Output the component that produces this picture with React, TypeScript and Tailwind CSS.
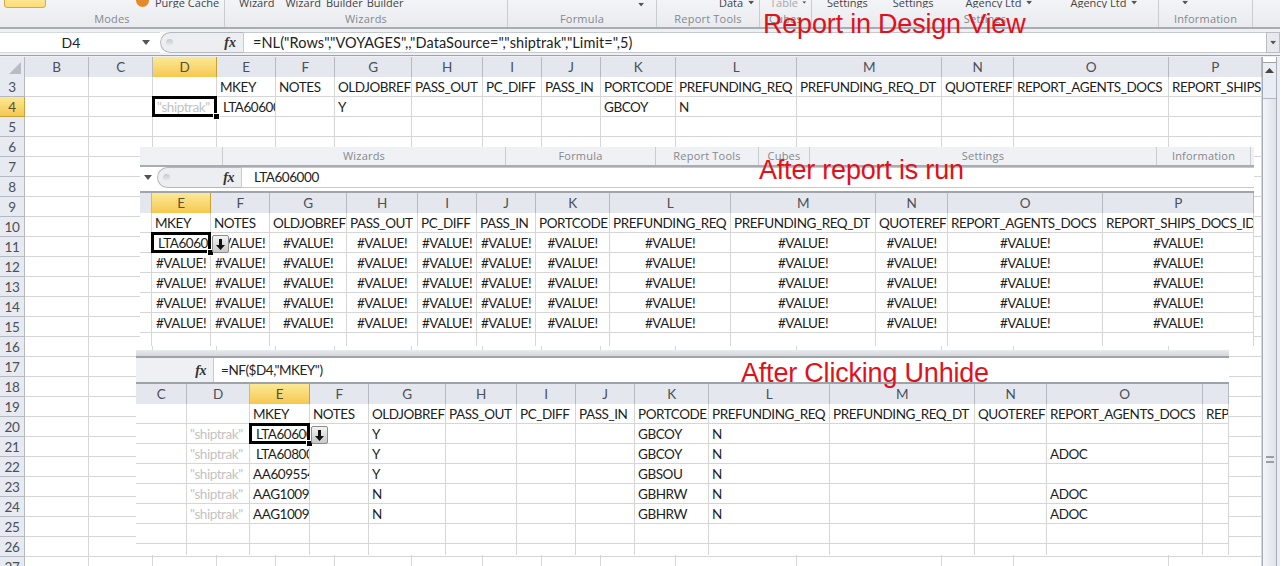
import type { ReactNode } from 'react';

const sheetFont = "font-['Lato','Open_Sans',sans-serif] text-[13.5px] tracking-[-0.45px]";

type CellValue = {
  text?: string;
  kind?: 'plain' | 'center' | 'ghost' | 'indent' | 'selected' | 'selectedGhost' | 'selectedButton';
};

const hdrs = ['MKEY', 'NOTES', 'OLDJOBREF', 'PASS_OUT', 'PC_DIFF', 'PASS_IN', 'PORTCODE', 'PREFUNDING_REQ', 'PREFUNDING_REQ_DT', 'QUOTEREF', 'REPORT_AGENTS_DOCS'];

const plain = (list: string[]): CellValue[] => list.map((text) => ({ text }));
const blank = (n: number): CellValue[] => Array.from({ length: n }, () => ({}));

const ArrowButton = () => (
  <div className="absolute left-[calc(100%+2px)] top-[2px] z-20 flex h-[18px] w-[17px] items-center justify-center rounded-[2px] border border-[#8d8d8d] bg-gradient-to-b from-[#f4f4f4] to-[#c9c9c9]">
    <svg width="9" height="11" viewBox="0 0 9 11">
      <path d="M3 0h3v6h3l-4.5 5L0 6h3z" fill="#111" />
    </svg>
  </div>
);

const Cell = ({ text, kind = 'plain' }: CellValue) => {
  const selected = kind === 'selected' || kind === 'selectedGhost' || kind === 'selectedButton';
  const tone =
    kind === 'center'
      ? 'text-center'
      : kind === 'ghost'
        ? 'pl-[3px] text-[#c3c3c3]'
        : kind === 'selectedGhost'
          ? 'pl-[4px] text-[#c3c3c3]'
          : kind === 'indent' || selected
            ? 'pl-[6px]'
            : 'pl-[3px]';
  return (
    <div className="relative h-[20px] border-r border-b border-[#d6d6d6] bg-white text-[#1d1d1d]">
      <div className={`h-full overflow-hidden whitespace-nowrap leading-[20px] ${tone}`}>{text}</div>
      {selected && (
        <div className="pointer-events-none absolute -top-[1px] -left-[1px] right-[-1px] bottom-[-1px] z-10 border-[3px] border-black">
          <div className="absolute -right-[5px] -bottom-[5px] h-[5px] w-[5px] bg-black outline outline-1 outline-white" />
        </div>
      )}
      {kind === 'selectedButton' && <ArrowButton />}
    </div>
  );
};

const ColHead = ({ label, active }: { label: string; active?: boolean }) => (
  <div
    className={`h-[20px] border-r text-center leading-[20px] ${
      active
        ? 'border-[#c9a233] bg-gradient-to-b from-[#fbe995] to-[#f5c84f] text-[#5a5030]'
        : 'border-[#b4b9c2] bg-[#e4e7ee] text-[#4b5058]'
    }`}
  >
    {label}
  </div>
);

const RowHead = ({ label, active }: { label: number; active?: boolean }) => (
  <div
    className={`h-[20px] border-r border-b text-center leading-[20px] ${
      active
        ? 'border-[#c9a233] bg-gradient-to-b from-[#fbe995] to-[#f5c84f] text-[#5a5030]'
        : 'border-[#b4b9c2] bg-[#e7eaf0] text-[#4b5058]'
    }`}
  >
    {label}
  </div>
);

const Bubble = () => (
  <div className="flex h-full flex-1 items-center rounded-l-full border-l border-y border-[#b4b8be] bg-[#eceef1] pl-[5px]">
    <div className="h-[7px] w-[7px] rounded-full bg-gradient-to-b from-[#c4c7cb] to-[#eceef1]" />
  </div>
);

const Fx = () => (
  <span className="mr-[7px] ml-[6px] font-['Liberation_Serif',serif] text-[14px] font-bold italic text-[#333]">fx</span>
);

const DownCaret = ({ className = '' }: { className?: string }) => (
  <svg width="9" height="5" viewBox="0 0 9 5" className={className}>
    <path d="M0 0h8L4 5z" fill="#555" />
  </svg>
);

const GroupLabel = ({ width, label }: { width: string; label: string }) => (
  <div
    className={`flex h-full shrink-0 items-center justify-center border-r border-[#c9ccd1] font-['Open_Sans',sans-serif] text-[11px] tracking-[0.2px] text-[#84888e] ${width}`}
  >
    {label}
  </div>
);

const topText = "font-['Open_Sans',sans-serif] text-[11px] text-[#444] whitespace-nowrap";

const RibbonGroup = ({ width, label, children }: { width: string; label: string; children?: ReactNode }) => (
  <div className={`flex h-full shrink-0 flex-col border-r border-[#c9ccd1] ${width}`}>
    <div className={`relative flex h-[10px] items-end overflow-hidden leading-[14px] ${topText}`}>{children}</div>
    <div className="flex flex-1 items-center justify-center pt-[3px] font-['Open_Sans',sans-serif] text-[11px] tracking-[0.2px] text-[#84888e]">
      {label}
    </div>
  </div>
);

const RedNote = ({ className, children }: { className: string; children: string }) => (
  <div className={`absolute z-30 whitespace-nowrap font-['Liberation_Sans',sans-serif] text-[27px] leading-[30px] tracking-[-0.2px] text-[#e2101a] ${className}`}>
    {children}
  </div>
);

const baseRows: { row: number; cells: CellValue[] }[] = [
  { row: 3, cells: [...blank(3), ...plain(hdrs), { text: 'REPORT_SHIPS_DOCS_ID' }] },
  {
    row: 4,
    cells: [
      ...blank(2),
      { text: '"shiptrak"', kind: 'selectedGhost' },
      { text: 'LTA606000', kind: 'indent' },
      {},
      { text: 'Y' },
      ...blank(3),
      { text: 'GBCOY' },
      { text: 'N' },
      ...blank(4),
    ],
  },
];

const baseSheet = Array.from({ length: 25 }, (_, i) => {
  const row = i + 3;
  return baseRows.find((r) => r.row === row) ?? { row, cells: blank(15) };
});

const v = (): CellValue => ({ text: '#VALUE!', kind: 'center' });

const secondRows: CellValue[][] = [
  [{}, ...plain(hdrs), { text: 'REPORT_SHIPS_DOCS_ID' }],
  [{}, { text: 'LTA606000', kind: 'selectedButton' }, ...Array.from({ length: 11 }, v)],
  ...Array.from({ length: 4 }, () => [{} as CellValue, ...Array.from({ length: 12 }, v)]),
  blank(13),
];

const thirdData = [
  ['LTA606000', 'Y', 'GBCOY', 'N', ''],
  ['LTA608000', 'Y', 'GBCOY', 'N', 'ADOC'],
  ['AA609554', 'Y', 'GBSOU', 'N', ''],
  ['AAG100900', 'N', 'GBHRW', 'N', 'ADOC'],
  ['AAG100901', 'N', 'GBHRW', 'N', 'ADOC'],
];

const thirdRows: CellValue[][] = [
  [...blank(2), ...plain(hdrs), { text: 'REPORT_SHIPS_DOCS_ID' }],
  ...thirdData.map((d, i): CellValue[] => [
    {},
    { text: '"shiptrak"', kind: 'ghost' },
    { text: d[0], kind: i === 0 ? 'selectedButton' : i === 1 ? 'indent' : 'plain' },
    {},
    { text: d[1] },
    ...blank(3),
    { text: d[2] },
    { text: d[3] },
    ...blank(2),
    { text: d[4] },
    {},
  ]),
  blank(14),
  blank(14),
];

const App = () => {
  return (
    <div className="relative h-[566px] w-[1285px] overflow-hidden bg-white">
      {/* Base sheet: report in design view */}
      <div className="w-[1280px]">
        <div className="flex h-[29px] border-b-2 border-[#a9adb3] bg-gradient-to-b from-[#f3f4f7] to-[#e9ebef] pr-[27px]">
          <RibbonGroup width="w-[225px]" label="Modes">
            <div className="absolute bottom-0 left-[4px] h-[14px] w-[42px] rounded-[3px] border border-[#dca53f] bg-gradient-to-b from-[#fdeda3] to-[#fcdc75]" />
            <div className="absolute bottom-[1px] left-[136px] h-[13px] w-[13px] rounded-full bg-[#e58a2c]" />
            <span className="absolute bottom-[-2px] left-[155px]">Purge Cache</span>
          </RibbonGroup>
          <RibbonGroup width="w-[283px]" label="Wizards">
            <div className="mb-[-2px] ml-[14px] flex">
              <span>Wizard</span>
              <span className="ml-[11px]">Wizard</span>
              <span className="ml-[5px]">Builder</span>
              <span className="ml-[4px]">Builder</span>
            </div>
          </RibbonGroup>
          <RibbonGroup width="w-[149px]" label="Formula">
            <DownCaret className="mb-[1px] ml-[129px] scale-75" />
          </RibbonGroup>
          <RibbonGroup width="w-[103px]" label="Report Tools">
            <span className="mb-[-2px] ml-[62px]">Data</span>
            <DownCaret className="mb-[3px] ml-[4px] scale-75" />
          </RibbonGroup>
          <RibbonGroup width="w-[52px]" label="Cubes">
            <span className="mb-[-2px] ml-[10px] text-[#a5a8ad]">Table</span>
            <DownCaret className="mb-[3px] ml-[2px] scale-50" />
          </RibbonGroup>
          <RibbonGroup width="w-[347px]" label="Settings">
            <span className="mb-[-2px] ml-[15px]">Settings</span>
            <span className="mb-[-2px] ml-[25px]">Settings</span>
            <span className="mb-[-2px] ml-[32px]">Agency Ltd</span>
            <DownCaret className="mb-[3px] ml-[4px] scale-75" />
            <span className="mb-[-2px] ml-[36px]">Agency Ltd</span>
            <DownCaret className="mb-[3px] ml-[4px] scale-75" />
          </RibbonGroup>
          <RibbonGroup width="w-[94px]" label="Information">
            <DownCaret className="mb-[3px] ml-[22px] scale-75" />
          </RibbonGroup>
        </div>

        <div className="h-[28px] bg-[#eef0f3] pt-[3px]">
          <div className="flex h-[21px] items-center bg-white">
            <div className="flex h-full w-[160px] shrink-0 items-center border-y border-[#d5d8dc] font-['Lato',sans-serif] text-[14px] text-[#222]">
              <span className="w-[142px] text-center">D4</span>
              <DownCaret />
            </div>
            <div className="flex h-full w-[83px] shrink-0 items-center">
              <Bubble />
              <div className="flex h-full items-center border-y border-[#b4b8be] bg-[#eceef1]">
                <Fx />
              </div>
            </div>
            <div className="flex h-full flex-1 items-center border-y border-l border-[#c6c9ce] pl-[9px] font-['Lato',sans-serif] text-[14.5px] tracking-[0.07px] text-[#222]">
              =NL("Rows","VOYAGES",,"DataSource=","shiptrak","Limit=",5)
            </div>
            <div className="flex h-full w-[14px] shrink-0 items-center justify-center border border-[#b9bdc3] bg-[#e6e9ee]">
              <DownCaret className="scale-75" />
            </div>
          </div>
          <div className="mt-[1px] h-[2px] border-b border-[#9ea3aa]" />
        </div>

        <div className="flex">
          <div className={`grid w-[1262px] grid-cols-[25px_64px_64px_64px_59px_59px_77px_71px_59px_59px_75px_121px_145px_72px_155px_93px] ${sheetFont}`}>
            <div className="flex h-[20px] items-end justify-end border-r border-[#b4b9c2] bg-[#e7eaf0] p-[3px]">
              <svg width="12" height="12" viewBox="0 0 12 12">
                <path d="M12 0v12H0z" fill="#b8bcc4" />
              </svg>
            </div>
            {['B', 'C', 'D', 'E', 'F', 'G', 'H', 'I', 'J', 'K', 'L', 'M', 'N', 'O', 'P'].map((c) => (
              <ColHead key={c} label={c} active={c === 'D'} />
            ))}
            {baseSheet.map((r) => (
              <div key={r.row} className="contents">
                <RowHead label={r.row} active={r.row === 4} />
                {r.cells.map((c, i) => (
                  <Cell key={i} {...c} />
                ))}
              </div>
            ))}
          </div>

          <div className="flex h-[509px] w-[18px]">
            <div className="flex w-[15px] flex-col border-x border-[#a9aeb6] bg-[#e9edf4]">
              <div className="h-[6px] border-b border-[#9ea3aa] bg-white" />
              <div className="flex h-[35px] items-start justify-center pt-[5px]">
                <svg width="9" height="5" viewBox="0 0 9 5">
                  <path d="M4.5 0L9 5H0z" fill="#444" />
                </svg>
              </div>
              <div className="flex flex-1 items-center justify-center border-t border-[#b3b8c0] bg-gradient-to-r from-[#f3f5f9] to-[#dfe3ea] pt-[254px]">
                <div className="h-[7px] w-[8px] border-y-2 border-[#9a9ea5]" />
              </div>
            </div>
            <div className="w-[3px] bg-[#e8ecf4]" />
          </div>
        </div>
      </div>

      {/* Pasted shot: after report is run */}
      <div className={`absolute left-[140px] top-[147px] z-10 h-[199px] w-[1114px] overflow-hidden bg-white ${sheetFont}`}>
        <div className="flex h-[20px] border-b-2 border-[#a9adb3] bg-[#f0f1f4]">
          <GroupLabel width="w-[83px]" label="" />
          <GroupLabel width="w-[283px]" label="Wizards" />
          <GroupLabel width="w-[150px]" label="Formula" />
          <GroupLabel width="w-[103px]" label="Report Tools" />
          <GroupLabel width="w-[51px]" label="Cubes" />
          <GroupLabel width="w-[347px]" label="Settings" />
          <GroupLabel width="w-[94px]" label="Information" />
        </div>
        <div className="flex h-[21px] items-center">
          <div className="flex h-full w-[17px] shrink-0 items-center pl-[4px]">
            <DownCaret />
          </div>
          <div className="flex h-full w-[84px] shrink-0 items-center">
            <Bubble />
            <div className="flex h-full items-center border-y border-[#b4b8be] bg-[#eceef1]">
              <Fx />
            </div>
          </div>
          <div className="flex h-full flex-1 items-center border-y border-l border-[#c6c9ce] pl-[12px] text-[#222]">LTA606000</div>
        </div>
        <div className="h-[5px] border-b-2 border-[#a0a5ac] bg-white" />
        <div className="grid grid-cols-[12px_59px_59px_77px_71px_59px_59px_74px_121px_145px_72px_155px_151px]">
          {['', 'E', 'F', 'G', 'H', 'I', 'J', 'K', 'L', 'M', 'N', 'O', 'P'].map((c) => (
            <ColHead key={c} label={c} active={c === 'E'} />
          ))}
          {secondRows.flatMap((r, y) => r.map((c, x) => <Cell key={`${y}-${x}`} {...c} />))}
        </div>
      </div>

      {/* Pasted shot: after clicking unhide */}
      <div className={`absolute left-[136px] top-[350px] z-20 h-[205px] w-[1093px] overflow-hidden bg-white ${sheetFont}`}>
        <div className="h-[8px] border-b-2 border-[#9ea3aa] bg-gradient-to-b from-[#e9eaed] to-[#d5d7db]" />
        <div className="flex h-[24px] items-center">
          <div className="flex h-full w-[77px] shrink-0 items-center justify-end bg-[#eff0f3]">
            <Fx />
          </div>
          <div className="flex h-full flex-1 items-center border-l border-[#c6c9ce] pl-[7px] text-[#222]">=NF($D4,"MKEY")</div>
        </div>
        <div className="grid grid-cols-[51px_63px_60px_59px_77px_71px_59px_59px_74px_121px_145px_72px_156px_26px] border-t-2 border-[#9ea3aa]">
          {['C', 'D', 'E', 'F', 'G', 'H', 'I', 'J', 'K', 'L', 'M', 'N', 'O', ''].map((c) => (
            <ColHead key={c} label={c} active={c === 'E'} />
          ))}
          {thirdRows.flatMap((r, y) => r.map((c, x) => <Cell key={`${y}-${x}`} {...c} />))}
        </div>
      </div>

      <RedNote className="left-[763px] top-[9px]">Report in Design View</RedNote>
      <RedNote className="left-[759px] top-[155px]">After report is run</RedNote>
      <RedNote className="left-[741px] top-[358px]">After Clicking Unhide</RedNote>
    </div>
  );
};

export default App;
